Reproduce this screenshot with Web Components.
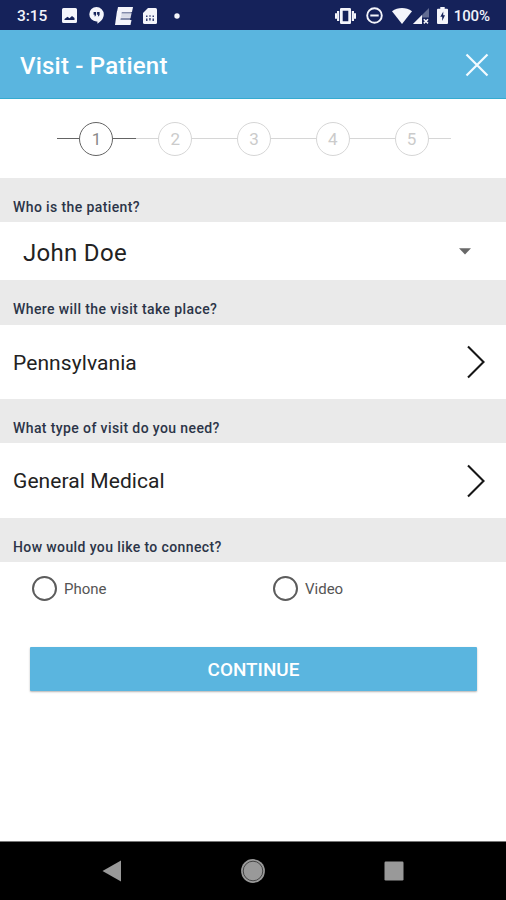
<!DOCTYPE html>
<html lang="en">
<head>
<meta charset="utf-8">
<title>Visit - Patient</title>
<style>
  html, body { margin: 0; height: 100%; background: #fff; }
  body { font-family: Roboto, "Liberation Sans", sans-serif; overflow: hidden; }
</style>
</head>
<body>
<visit-app></visit-app>
<script>
const define = (name, html) => {
  const template = document.createElement('template');
  template.innerHTML = html;
  customElements.define(name, class extends HTMLElement {
    constructor() {
      super();
      this.attachShadow({ mode: 'open' }).append(template.content.cloneNode(true));
    }
  });
};

define('status-bar', `
<style>
  :host { display: flex; align-items: center; height: 30px; box-sizing: border-box; padding: 1px 16px 0 17px; background: #15225a; color: #f1f3fb; font-size: 15.5px; font-weight: 500; line-height: 18px; }
  svg { display: block; fill: #f4f5fb; flex: none; }
  .time { width: 45px; letter-spacing: -.1px; }
  .grow { flex: 1; }
  .pct { font-size: 15px; letter-spacing: -.1px; }
</style>
<span class="time">3:15</span>
<svg width="15" height="15" viewBox="0 0 15 15"><path fill-rule="evenodd" d="M1.500 0h12Q15 0 15 1.500v12Q15 15 13.500 15h-12Q0 15 0 13.500v-12Q0 0 1.500 0ZM2.500 12h10V10L10 8 7.500 10.300 5.500 8.700 2.500 11Z"/></svg>
<svg style="margin-left:12px" width="15" height="17" viewBox="0 0 15 17"><path fill-rule="evenodd" d="M7.500 0a7.300 7.300 0 0 1 7.300 7.300c0 4-2.700 7.300-6.400 9.400V14.400H7.500A7.200 7.200 0 0 1 7.500 0ZM4.600 5v2.800h1.300L5.300 9.200h1.100L7.100 7.800V5ZM8.100 5v2.800H9.400L8.800 9.200h1.100L10.600 7.800V5Z"/></svg>
<svg style="margin-left:11px" width="18" height="18" viewBox="0 0 18 18"><path d="M3 0H18L17 5H2Z"/><path d="M2 4H7L4.500 18H0Z"/><path opacity=".88" d="M6 6.500H16.500L15.500 11H5Z"/><path d="M3.500 13H16.500L15.500 18H2.500Z"/><path opacity=".5" d="M5 4.500H16.500V7H5ZM4.500 10.500H15.500L15 13.500H4Z"/></svg>
<svg style="margin-left:10px" width="14" height="16" viewBox="0 0 14 16"><path d="M5 0h7.500Q14 0 14 1.500v13Q14 16 12.500 16h-11Q0 16 0 14.500V5Z"/><path fill="#15225a" opacity=".85" d="M3 7.500h1.500V9H3ZM6 7.500h2v1H6ZM9.500 7.500H11V9H9.500ZM3 10.500h1.500V13H3ZM6.200 10h1.500v2.500H6.200ZM9.500 10.500H11V13H9.500Z"/></svg>
<svg style="margin-left:17px" width="6" height="6" viewBox="0 0 6 6"><circle cx="3" cy="3" r="2.700"/></svg>
<span class="grow"></span>
<svg width="21" height="16" viewBox="0 0 21 16"><path fill-rule="evenodd" d="M6.200 0h8.600Q16 0 16 1.200v13.600Q16 16 14.800 16H6.200Q5 16 5 14.800V1.200Q5 0 6.200 0ZM7.700 2.700v10.600h5.600V2.700ZM2 3h2.200v10H2ZM16.800 3H19v10h-2.200ZM0 5.200h2.100v5.600H0ZM18.900 5.200H21v5.600h-2.100Z"/></svg>
<svg style="margin-left:10px" width="17" height="17" viewBox="0 0 17 17"><circle cx="8.500" cy="8.500" r="7.300" fill="none" stroke="#f4f5fb" stroke-width="1.900"/><path d="M4.300 7.500h8.400v2H4.300Z"/></svg>
<svg style="margin-left:9px" width="20" height="16" viewBox="0 0 20 16"><path d="M0 3.200C6-1 14-1 20 3.200L10 16Z"/></svg>
<svg style="margin-left:1px" width="17" height="16" viewBox="0 0 17 16"><path opacity=".35" d="M16 0v16H0Z"/><path d="M9 7v9H0Z"/><path fill="#15225a" d="M9 9.500h8V16H9Z"/><path d="m10.800 11.200 4.200 4.200m0-4.200-4.200 4.200" stroke="#f4f5fb" stroke-width="1.500"/></svg>
<svg style="margin-left:7px" width="11" height="17" viewBox="0 0 11 17"><path d="M3.300 0h4.400v1.700H10q1 0 1 1V16q0 1-1 1H1q-1 0-1-1V2.700q0-1 1-1h2.300Z"/><path fill="#15225a" d="M6.300 4.500 3.300 9.800H5.200V14L8 8.300H6.200Z"/></svg>
<span class="pct" style="margin-left:6px">100%</span>
`);

define('title-bar', `
<style>
  :host { display: flex; align-items: center; justify-content: space-between; height: 69px; box-sizing: border-box; padding: 1px 17px 0 20px; background: #5ab5df; border-bottom: 1px solid #35abd0; color: #fff; font-size: 24px; font-weight: 500; line-height: 30px; }
  svg { display: block; }
  .t { padding-top: 2px; letter-spacing: .2px; }
</style>
<span class="t"><slot></slot></span>
<svg width="24" height="24" viewBox="0 0 24 24"><path d="M1.500 1.500 22.500 22.500M22.500 1.500 1.500 22.500" stroke="#f3fbff" stroke-width="2.200"/></svg>
`);

define('step-item', `
<style>
  :host { display: flex; align-items: center; flex: 1; color: #cbcbcb; --line: #d6d6d6; }
  :host([active]) { color: #8a8a8a; --line: #646464; }
  i { flex: 1; height: 1.500px; background: var(--line); }
  b { box-sizing: border-box; width: 34px; height: 34px; border: 1.500px solid var(--line); border-radius: 50%; display: grid; place-items: center; font-size: 17px; font-weight: 400; line-height: 20px; }
</style>
<i></i><b><slot></slot></b><i></i>
`);

define('step-track', `
<style>
  :host { display: flex; height: 79px; box-sizing: border-box; padding: 0 55px 0 57px; background: #fff; }
</style>
<slot></slot>
`);

define('section-label', `
<style>
  :host { display: block; height: var(--h, 44px); box-sizing: border-box; padding: 20px 13px 0; background: #eaeaea; color: #2c3548; font-size: 14px; font-weight: 500; line-height: 18px; letter-spacing: .39px; }
</style>
<slot></slot>
`);

define('pick-row', `
<style>
  :host { display: flex; align-items: center; justify-content: space-between; height: var(--h, 75px); box-sizing: border-box; padding: 1px 20px 0 13px; background: #fff; color: #222; font-size: 21px; line-height: 26px; letter-spacing: .08px; }
  :host([select]) { padding: 2px 35px 0 23px; font-size: 24px; letter-spacing: .3px; }
  :host([select]) span { padding-top: 1px; }
  svg { display: block; margin-top: -1px; }
  .down, :host([select]) .next { display: none; }
  :host([select]) .down { display: block; }
</style>
<span><slot></slot></span>
<svg class="next" width="20" height="34" viewBox="0 0 20 34"><path d="M2 1.500 17.500 17 2 32.500" fill="none" stroke="#161616" stroke-width="2.100"/></svg>
<svg class="down" width="12" height="7" viewBox="0 0 12 7"><path d="M0 .3H12L6 6.600Z" fill="#686868"/></svg>
`);

define('radio-option', `
<style>
  :host { display: flex; align-items: center; gap: 7px; color: #555; font-size: 15px; line-height: 20px; }
  i { box-sizing: border-box; width: 25px; height: 25px; border: 2px solid #5c5c5c; border-radius: 50%; }
</style>
<i></i><span><slot></slot></span>
`);

define('main-button', `
<style>
  :host { display: block; margin: 0 29px 0 30px; }
  button { display: block; width: 100%; height: 44px; margin: 0; padding: 2px 0 0; border: 0; border-radius: 1px; background: #5ab5df; box-shadow: 0 1px 2px rgba(0,0,0,.3); color: #fff; font: 500 18.900px/24px Roboto, "Liberation Sans", sans-serif; }
</style>
<button><slot></slot></button>
`);

define('nav-bar', `
<style>
  :host { display: flex; align-items: center; justify-content: space-between; height: 59px; box-sizing: border-box; padding: 0 102px; background: #000; border-top: 1px solid #777; }
  svg { display: block; }
</style>
<svg width="20" height="22" viewBox="0 0 20 22"><path d="M.5 11 19 .500V21.500Z" fill="#999"/></svg>
<svg width="24" height="24" viewBox="0 0 24 24"><circle cx="12" cy="12" r="11.900" fill="#999"/><circle cx="12" cy="12" r="9.800" fill="none" stroke="#444" stroke-width="1"/></svg>
<svg width="20" height="20" viewBox="0 0 20 20"><rect x=".5" y=".5" width="19" height="19" rx="1.200" fill="#999"/></svg>
`);

define('visit-app', `
<style>
  :host { display: flex; flex-direction: column; height: 900px; width: 506px; background: #fff; }
  .radios { display: grid; grid-template-columns: 241px 1fr; padding: 14px 0 0 32px; height: 85px; box-sizing: border-box; align-items: start; }
  nav-bar { margin-top: auto; }
</style>
<status-bar></status-bar>
<title-bar>Visit - Patient</title-bar>
<step-track><step-item active>1</step-item><step-item>2</step-item><step-item>3</step-item><step-item>4</step-item><step-item>5</step-item></step-track>
<section-label>Who is the patient?</section-label>
<pick-row select style="--h:58px">John Doe</pick-row>
<section-label style="--h:45px">Where will the visit take place?</section-label>
<pick-row style="--h:74px">Pennsylvania</pick-row>
<section-label>What type of visit do you need?</section-label>
<pick-row>General Medical</pick-row>
<section-label>How would you like to connect?</section-label>
<div class="radios"><radio-option>Phone</radio-option><radio-option>Video</radio-option></div>
<main-button>CONTINUE</main-button>
<nav-bar></nav-bar>
`);
</script>
</body>
</html>
